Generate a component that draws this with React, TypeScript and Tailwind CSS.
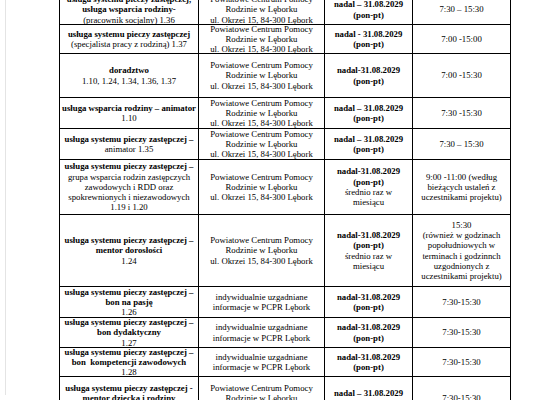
type Line = { t: string; b?: boolean }
type Row = { h: string; c: Line[][] }

const b = (t: string): Line => ({ t, b: true })
const n = (t: string): Line => ({ t })

const pcpr = [n('Powiatowe Centrum Pomocy'), n('Rodzinie w Lęborku'), n('ul. Okrzei 15, 84-300 Lębork')]
const indyw = [n('indywidualnie uzgadniane'), n('informacje w PCPR Lębork')]

const rows: Row[] = [
  {
    h: 'h-[30px]',
    c: [
      [b('usługa systemu pieczy zastępczej,'), b('usługa wsparcia rodziny-'), n('(pracownik socjalny) 1.36')],
      pcpr,
      [b('nadal – 31.08.2029'), b('(pon-pt)')],
      [n('7:30 – 15:30')],
    ],
  },
  {
    h: 'h-[29px]',
    c: [
      [b('usługa systemu pieczy zastępczej'), n('(specjalista pracy z rodziną) 1.37')],
      pcpr,
      [b('nadal - 31.08.2029'), b('(pon-pt)')],
      [n('7:00 -15:00')],
    ],
  },
  {
    h: 'h-[44px]',
    c: [
      [b('doradztwo'), n('1.10, 1.24, 1.34, 1.36, 1.37')],
      pcpr,
      [b('nadal-31.08.2029'), b('(pon-pt)')],
      [n('7:00 -15:30')],
    ],
  },
  {
    h: 'h-[31px]',
    c: [
      [b('usługa wsparcia rodziny – animator'), n('1.10')],
      pcpr,
      [b('nadal – 31.08.2029'), b('(pon-pt)')],
      [n('7:30 -15:30')],
    ],
  },
  {
    h: 'h-[31px]',
    c: [
      [b('usługa systemu pieczy zastępczej –'), n('animator 1.35')],
      pcpr,
      [b('nadal – 31.08.2029'), b('(pon-pt)')],
      [n('7:30 – 15:30')],
    ],
  },
  {
    h: 'h-[55px]',
    c: [
      [
        b('usługa systemu pieczy zastępczej –'),
        n('grupa wsparcia rodzin zastępczych'),
        n('zawodowych i RDD oraz'),
        n('spokrewnionych i niezawodowych'),
        n('1.19 i 1.20'),
      ],
      pcpr,
      [b('nadal-31.08.2029'), b('(pon-pt)'), n('średnio raz w'), n('miesiącu')],
      [n('9:00 -11:00 (według'), n('bieżących ustaleń z'), n('uczestnikami projektu)')],
    ],
  },
  {
    h: 'h-[72px]',
    c: [
      [b('usługa systemu pieczy zastępczej –'), b('mentor dorosłości'), n('1.24')],
      pcpr,
      [b('nadal-31.08.2029'), b('(pon-pt)'), n('średnio raz w'), n('miesiącu')],
      [
        n('15:30'),
        n('(również w godzinach'),
        n('popołudniowych w'),
        n('terminach i godzinnch'),
        n('uzgodnionych z'),
        n('uczestnikami projektu)'),
      ],
    ],
  },
  {
    h: 'h-[31px]',
    c: [
      [b('usługa systemu pieczy zastępczej –'), b('bon na pasję'), n('1.26')],
      indyw,
      [b('nadal-31.08.2029'), b('(pon-pt)')],
      [n('7:30-15:30')],
    ],
  },
  {
    h: 'h-[30px]',
    c: [
      [b('usługa systemu pieczy zastępczej –'), b('bon dydaktyczny'), n('1.27')],
      indyw,
      [b('nadal-31.08.2029'), b('(pon-pt)')],
      [n('7:30-15:30')],
    ],
  },
  {
    h: 'h-[29px]',
    c: [
      [b('usługa systemu pieczy zastępczej –'), b('bon  kompetencji zawodowych'), n('1.28')],
      indyw,
      [b('nadal-31.08.2029'), b('(pon-pt)')],
      [n('7:30-15:30')],
    ],
  },
  {
    h: 'h-[44px]',
    c: [
      [b('usługa systemu pieczy zastępczej -'), b('mentor dziecka i rodziny'), n('1.24')],
      pcpr,
      [b('nadal – 31.08.2029'), b('(pon-pt)')],
      [n('7:30-15:30')],
    ],
  },
]

const Cell = ({ lines, last }: { lines: Line[]; last?: boolean }) => (
  <div
    className={`flex flex-col items-center justify-center text-center border-black ${last ? '' : 'border-r'}`}
  >
    {lines.map((l, i) => (
      <span key={i} className={`whitespace-pre leading-[10.3px] ${l.b ? 'font-bold' : ''}`}>
        {l.t}
      </span>
    ))}
  </div>
)

export default function App() {
  return (
    <div className="w-[555px] h-[400px] overflow-hidden bg-white pl-[5px]">
      <div className="h-full border-l border-[#e4e4e4] pl-[53px]">
        <div
          className="-mt-[5px] w-[452px] border-l border-r border-black text-[8.75px] text-black"
          style={{ fontFamily: '"Liberation Serif", "Times New Roman", serif' }}
        >
          {rows.map((r, i) => (
            <div
              key={i}
              className={`grid grid-cols-[139px_126px_88px_97px] grid-rows-1 border-b border-black ${r.h}`}
            >
              {r.c.map((lines, j) => (
                <Cell key={j} lines={lines} last={j === 3} />
              ))}
            </div>
          ))}
        </div>
      </div>
    </div>
  )
}
